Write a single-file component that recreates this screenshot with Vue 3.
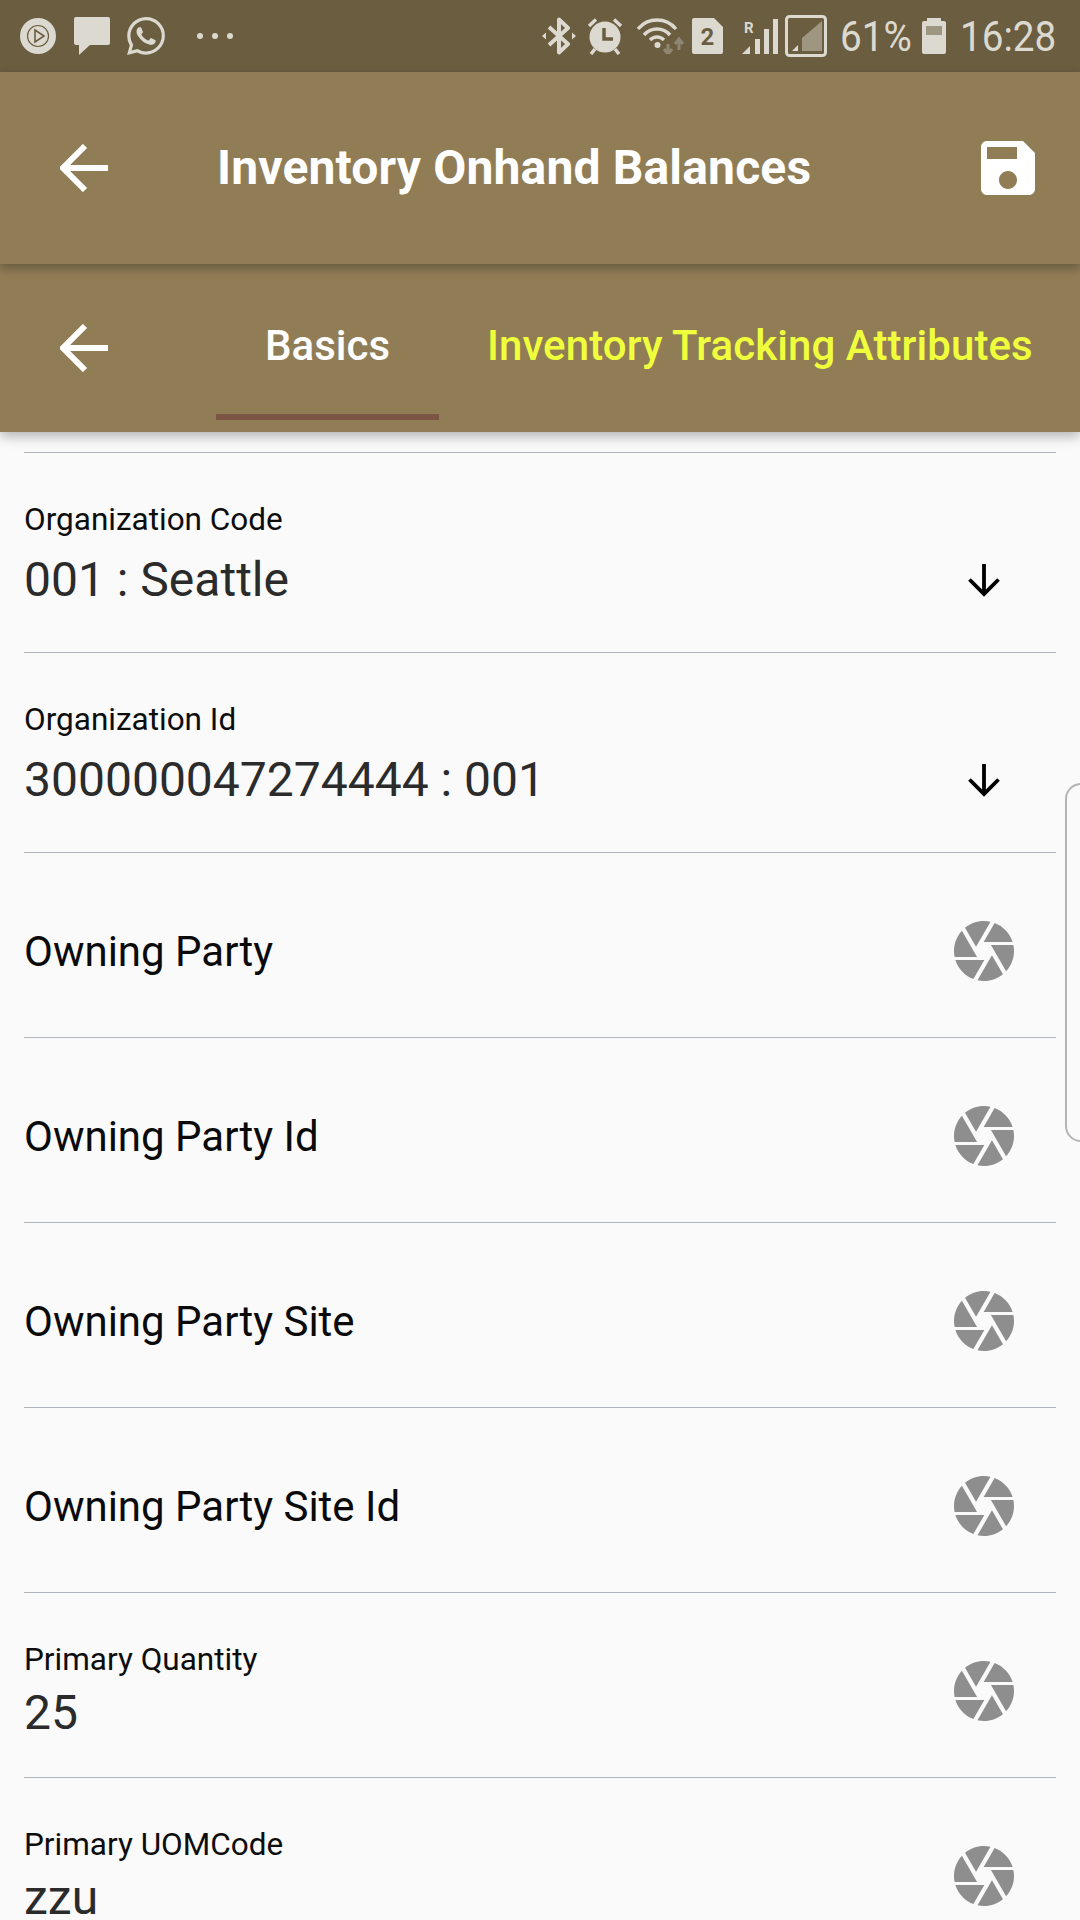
<script setup>
const rows = [
  { label: 'Organization Code', value: '001 : Seattle', icon: 'arrow', tall: true },
  { label: 'Organization Id', value: '300000047274444 : 001', icon: 'arrow', tall: true },
  { label: 'Owning Party', icon: 'camera' },
  { label: 'Owning Party Id', icon: 'camera' },
  { label: 'Owning Party Site', icon: 'camera' },
  { label: 'Owning Party Site Id', icon: 'camera' },
  { label: 'Primary Quantity', value: '25', icon: 'camera' },
  { label: 'Primary UOMCode', value: 'zzu', icon: 'camera' },
]
const camera = 'M9.4 10.5l4.77-8.26C13.47 2.09 12.75 2 12 2c-2.4 0-4.6.85-6.32 2.25l3.66 6.35.06-.1zM21.54 9c-.92-2.92-3.15-5.26-6-6.34L11.88 9h9.66zm.26 1h-7.49l.29.5 4.76 8.25C21 16.97 22 14.61 22 12c0-.69-.07-1.35-.2-2zM8.54 12l-3.9-6.75C3.01 7.03 2 9.39 2 12c0 .69.07 1.35.2 2h7.49l-1.15-2zm-6.08 3c.92 2.92 3.15 5.26 6 6.34L12.12 15H2.46zm11.27 0l-3.9 6.76c.7.15 1.42.24 2.17.24 2.4 0 4.6-.85 6.32-2.25l-3.66-6.35-.93 1.6z'
const whatsapp = 'M17.472 14.382c-.297-.149-1.758-.867-2.03-.967-.273-.099-.471-.148-.67.15-.197.297-.767.966-.94 1.164-.173.199-.347.223-.644.075-.297-.15-1.255-.463-2.39-1.475-.883-.788-1.48-1.761-1.653-2.059-.173-.297-.018-.458.13-.606.134-.133.298-.347.446-.52.149-.174.198-.298.298-.497.099-.198.05-.371-.025-.52-.075-.149-.669-1.612-.916-2.207-.242-.579-.487-.5-.669-.51-.173-.008-.371-.01-.57-.01-.198 0-.52.074-.792.372-.272.297-1.04 1.016-1.04 2.479 0 1.462 1.065 2.875 1.213 3.074.149.198 2.096 3.2 5.077 4.487.709.306 1.262.489 1.694.625.712.227 1.36.195 1.871.118.571-.085 1.758-.719 2.006-1.413.248-.694.248-1.289.173-1.413-.074-.124-.272-.198-.57-.347m-5.421 7.403h-.004a9.87 9.87 0 01-5.031-1.378l-.361-.214-3.741.982.998-3.648-.235-.374a9.86 9.86 0 01-1.51-5.26c.001-5.45 4.436-9.884 9.888-9.884 2.64 0 5.122 1.03 6.988 2.898a9.825 9.825 0 012.893 6.994c-.003 5.45-4.437 9.884-9.885 9.884m8.413-18.297A11.815 11.815 0 0012.05 0C5.495 0 .16 5.335.157 11.892c0 2.096.547 4.142 1.588 5.945L.057 24l6.305-1.654a11.882 11.882 0 005.683 1.448h.005c6.554 0 11.89-5.335 11.893-11.893a11.821 11.821 0 00-3.48-8.413z'
</script>

<template>
  <div class="screen">
    <div class="status">
      <svg class="s-play" width="36" height="36" viewBox="0 0 36 36">
        <circle cx="18" cy="18" r="18" fill="#dcd9d0" />
        <circle cx="18" cy="18" r="10.5" fill="none" stroke="#6b5d40" stroke-width="1.2" />
        <path d="M15 12 L24 18 L15 24 Z" fill="none" stroke="#6b5d40" stroke-width="1.6" />
      </svg>
      <svg class="s-chat" width="36" height="38" viewBox="0 0 36 38">
        <path d="M2 0 H34 a2 2 0 0 1 2 2 V26 a2 2 0 0 1 -2 2 H16 L5 38 V28 H2 a2 2 0 0 1 -2 -2 V2 a2 2 0 0 1 2 -2 Z" fill="#dcd9d0" />
      </svg>
      <svg class="s-wa" width="38" height="38" viewBox="0 0 24 24"><path :d="whatsapp" fill="#dcd9d0" /></svg>
      <svg class="s-dots" width="36" height="8" viewBox="0 0 36 8">
        <circle cx="3" cy="4" r="3" fill="#dcd9d0" /><circle cx="18" cy="4" r="3" fill="#dcd9d0" /><circle cx="33" cy="4" r="3" fill="#dcd9d0" />
      </svg>
      <div class="status-right">
        <svg class="s-bt" width="34" height="38" viewBox="0 0 34 38">
          <path d="M7 10 L26 27 L17 35.5 V2.5 L26 11 L7 28" fill="none" stroke="#dcd9d0" stroke-width="4" stroke-linejoin="round" />
          <path d="M0 19 L4 15.5 V22.5 Z M34 19 L30 15.5 V22.5 Z" fill="#dcd9d0" />
        </svg>
        <svg class="s-alarm" width="36" height="38" viewBox="0 0 36 38">
          <circle cx="18" cy="20" r="15.5" fill="#dcd9d0" />
          <path d="M17 11 V22 H26" fill="none" stroke="#6b5d40" stroke-width="3.5" />
          <path d="M2 9 L9 2.5 M34 9 L27 2.5 M8 32 L4 37 M28 32 L32 37" stroke="#dcd9d0" stroke-width="3.5" fill="none" />
        </svg>
        <svg class="s-wifi" width="48" height="36" viewBox="0 0 48 36">
          <path d="M1 11 C11 -1 29 -1 39 11 M7 17 C14 9 26 9 33 17 M13 22 C17 18 23 18 27 22" fill="none" stroke="#dcd9d0" stroke-width="3.5" />
          <circle cx="20.5" cy="27" r="3" fill="#dcd9d0" />
          <path d="M31 26 V36 M27 31 L31 36 L35 31 M42 32 V21 M38 26 L42 21 L46 26" fill="none" stroke="#8f8672" stroke-width="3" />
        </svg>
        <svg class="s-sim" width="31" height="36" viewBox="0 0 31 36">
          <path d="M2 0 H22 L31 9 V34 a2 2 0 0 1 -2 2 H2 a2 2 0 0 1 -2 -2 V2 a2 2 0 0 1 2 -2 Z" fill="#dcd9d0" />
          <text x="15.5" y="27" text-anchor="middle" class="sim-text">2</text>
        </svg>
        <svg class="s-signal" width="36" height="37" viewBox="0 0 36 37">
          <text x="2" y="15" class="r-text">R</text>
          <path d="M0 36 L8 28 V36 Z" fill="#dcd9d0" />
          <rect x="13" y="21" width="5" height="15" fill="#dcd9d0" />
          <rect x="22" y="11" width="5" height="25" fill="#dcd9d0" />
          <rect x="31" y="1" width="5" height="35" fill="#dcd9d0" />
        </svg>
        <svg class="s-box" width="42" height="42" viewBox="0 0 42 42">
          <rect x="1.5" y="1.5" width="39" height="39" rx="3" fill="none" stroke="#dcd9d0" stroke-width="3" />
          <path d="M7 36 L13 30 V36 Z" fill="#dcd9d0" />
          <path d="M17 36 V23 L37 6 V36 Z" fill="#9e9681" />
        </svg>
        <span class="s-text s-pct">61%</span>
        <svg class="s-batt" width="24" height="36" viewBox="0 0 24 36">
          <path d="M5 0 H19 V3 H22 a2 2 0 0 1 2 2 V34 a2 2 0 0 1 -2 2 H2 a2 2 0 0 1 -2 -2 V5 a2 2 0 0 1 2 -2 H5 Z" fill="#dcd9d0" />
          <rect x="4" y="8" width="16" height="9" fill="#9e9681" />
        </svg>
        <span class="s-text s-time">16:28</span>
      </div>
    </div>

    <header class="toolbar">
      <svg class="back" width="48" height="48" viewBox="0 0 48 48">
        <path d="M48 24 H4 M25 2 L3 24 L25 46" fill="none" stroke="#fff" stroke-width="6" />
      </svg>
      <h1 class="title">Inventory Onhand Balances</h1>
      <svg class="save" width="72" height="72" viewBox="0 0 24 24">
        <path fill="#fff" d="M17 3H5c-1.11 0-2 .9-2 2v14c0 1.1.89 2 2 2h14c1.1 0 2-.9 2-2V7l-4-4zm-5 16c-1.66 0-3-1.34-3-3s1.34-3 3-3 3 1.34 3 3-1.34 3-3 3zm3-10H5V5h10v4z" />
      </svg>
    </header>

    <nav class="tabbar">
      <svg class="back" width="48" height="48" viewBox="0 0 48 48">
        <path d="M48 24 H4 M25 2 L3 24 L25 46" fill="none" stroke="#fff" stroke-width="6" />
      </svg>
      <div class="tab active">Basics</div>
      <div class="tab other">Inventory Tracking Attributes</div>
    </nav>

    <main class="list">
      <div v-for="r in rows" :key="r.label" class="row" :class="{ tall: r.tall }">
        <div class="text">
          <template v-if="r.value">
            <div class="label">{{ r.label }}</div>
            <div class="value">{{ r.value }}</div>
          </template>
          <div v-else class="plain">{{ r.label }}</div>
        </div>
        <div class="icon">
          <svg v-if="r.icon === 'arrow'" width="34" height="34" viewBox="0 0 34 34">
            <path d="M17 1 V31 M2.5 16.5 L17 31 L31.5 16.5" fill="none" stroke="#000" stroke-width="3.8" />
          </svg>
          <svg v-else width="72" height="72" viewBox="0 0 24 24"><path :d="camera" fill="#8e8e8e" /></svg>
        </div>
      </div>
    </main>

    <div class="edge"></div>
  </div>
</template>

<style>
html, body { margin: 0; padding: 0; }
</style>

<style scoped>
.screen {
  position: relative;
  width: 1080px;
  height: 1920px;
  overflow: hidden;
  background: #fafafa;
  font-family: Roboto, "Noto Sans", sans-serif;
  display: flex;
  flex-direction: column;
}
.status {
  height: 72px;
  flex: none;
  background: #6b5d40;
  display: flex;
  align-items: center;
  padding-left: 20px;
  box-sizing: border-box;
}
.s-chat { margin-left: 18px; }
.s-wa { margin-left: 17px; }
.s-dots { margin-left: 32px; }
.status-right {
  margin-left: auto;
  display: flex;
  align-items: center;
  padding-right: 24px;
}
.s-alarm { margin-left: 11px; }
.s-wifi { margin-left: 14px; }
.s-sim { margin-left: 7px; }
.s-signal { margin-left: 19px; }
.s-box { margin-left: 7px; }
.s-pct { margin-left: 13px; width: 69px; }
.s-batt { margin-left: 13px; }
.s-time { margin-left: 14px; width: 96px; }
.s-text {
  color: #dcd9d0;
  font-size: 43px;
  font-weight: 400;
  line-height: 48px;
  white-space: nowrap;
  display: inline-block;
  transform: scaleX(0.9);
  transform-origin: left center;
}
.sim-text { font: 700 24px Roboto, sans-serif; fill: #6b5d40; }
.r-text { font: 700 15px Roboto, sans-serif; fill: #dcd9d0; }

.back { flex: none; }
.toolbar {
  height: 192px;
  flex: none;
  background: #907d56;
  display: flex;
  align-items: center;
  padding-left: 60px;
  padding-right: 36px;
  box-sizing: border-box;
  position: relative;
  z-index: 2;
  box-shadow: 0 4px 10px rgba(0, 0, 0, 0.3);
}
.title {
  margin: 0 0 0 109px;
  font-size: 48px;
  font-weight: 700;
  letter-spacing: 0.16px;
  color: #fff;
  line-height: 56px;
  white-space: nowrap;
}
.save { margin-left: auto; }
.tabbar {
  height: 168px;
  flex: none;
  background: #907d56;
  display: flex;
  align-items: center;
  padding-left: 60px;
  box-sizing: border-box;
  position: relative;
  z-index: 1;
  box-shadow: 0 4px 12px rgba(0, 0, 0, 0.3);
}
.tabbar .back { margin-right: 108px; }
.tab {
  flex: none;
  align-self: stretch;
  display: flex;
  align-items: center;
  justify-content: center;
  padding: 13px 49px 0;
  margin-bottom: 12px;
  font-size: 42px;
  font-weight: 500;
  white-space: nowrap;
  border-bottom: 6px solid transparent;
}
.active { color: #fff; border-bottom-color: #7b5546; }
.other { color: #f0ff3c; letter-spacing: 0.08px; padding-left: 48px; padding-right: 0; }

.list {
  padding-top: 20px;
  display: flex;
  flex-direction: column;
  flex: none;
}
.row {
  height: 185px;
  flex: none;
  margin: 0 24px;
  border-top: 1px solid #b0b6bc;
  box-sizing: border-box;
  display: flex;
  align-items: center;
  justify-content: space-between;
  padding-top: 12px;
}
.row.tall {
  height: 200px;
  align-items: flex-start;
  padding-top: 47px;
}
.row.tall .icon { margin-top: 63px; }
.row.tall .value { margin-top: 12px; }
.label { font-size: 31.5px; color: #0d0d0d; line-height: 40px; }
.value { font-size: 48px; color: #2b2b2b; line-height: 56px; margin-top: 5px; }
.plain { font-size: 42px; color: #0a0a0a; line-height: 50px; padding-top: 2px; }
.text:has(.value) { margin-top: -2px; }
.row.tall .text { margin-top: 0; }
.icon {
  width: 72px;
  display: flex;
  justify-content: center;
  margin-right: 36px;
}
.edge {
  position: absolute;
  right: -10px;
  top: 783px;
  width: 25px;
  height: 359px;
  box-sizing: border-box;
  border: 2px solid #b4b4b4;
  border-radius: 16px 0 0 16px;
}
</style>
